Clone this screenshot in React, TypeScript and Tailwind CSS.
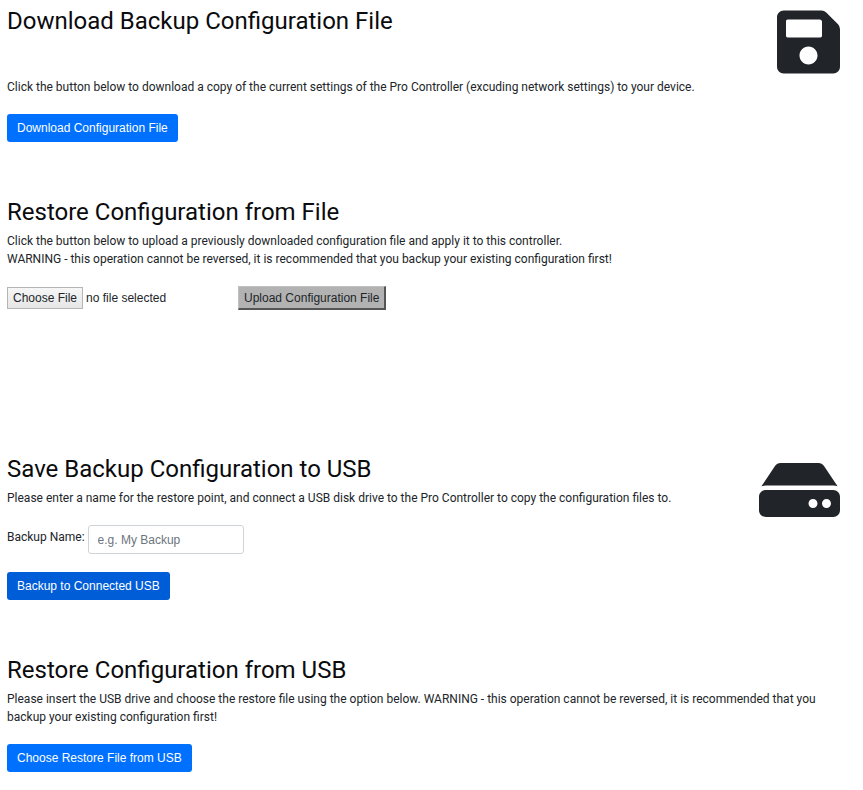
import { useState } from 'react'
import type { ReactNode } from 'react'
import { FaHdd, FaSave } from 'react-icons/fa'

interface SectionProps {
  title: string
  icon?: ReactNode
  children: ReactNode
}

function Section({ title, icon, children }: SectionProps) {
  return (
    <section className="flex items-start">
      <div className="min-w-0 flex-1">
        <h2 className="mb-[5px] text-[24px] leading-[30px] font-normal text-[#0a0b0d]">{title}</h2>
        {children}
      </div>
      {icon}
    </section>
  )
}

interface PrimaryButtonProps {
  active?: boolean
  children: ReactNode
}

function PrimaryButton({ active, children }: PrimaryButtonProps) {
  return (
    <button
      type="button"
      className={`block h-7 rounded-[3px] px-[10px] font-['Liberation_Sans',sans-serif] text-[12px] text-white ${
        active ? 'bg-[#005dd8]' : 'bg-[#0070ff] hover:bg-[#005dd8]'
      }`}
    >
      {children}
    </button>
  )
}

export default function App() {
  const [fileName, setFileName] = useState('')
  const [backupName, setBackupName] = useState('')

  return (
    <main className="bg-white px-[7px] pt-[6px] pb-[18px] font-['Roboto',sans-serif] text-[12px] leading-[18px] text-[#212529]">
      {/* Download */}
      <Section
        title="Download Backup Configuration File"
        icon={<FaSave className="mr-4 h-[72px] w-[63px] shrink-0" />}
      >
        <p className="mt-[42px] mb-[18px]">
          Click the button below to download a copy of the current settings of the Pro Controller (excuding network settings) to your device.
        </p>
        <PrimaryButton>Download Configuration File</PrimaryButton>
      </Section>

      {/* Restore from file */}
      <div className="mt-[55px]">
        <Section title="Restore Configuration from File">
          <p>
            Click the button below to upload a previously downloaded configuration file and apply it to this controller.
            <br />
            WARNING - this operation cannot be reversed, it is recommended that you backup your existing configuration first!
          </p>
          <form className="mt-[18px] flex items-center font-['Liberation_Sans',sans-serif]">
            <div className="flex w-[231px] items-center gap-[3px]">
              <label
                htmlFor="config-file"
                className="h-[22px] shrink-0 border border-[#b5b5b5] bg-linear-to-b from-[#f6f6f6] to-[#e6e6e6] px-[5px] leading-[20px] whitespace-nowrap"
              >
                Choose File
              </label>
              <input
                id="config-file"
                type="file"
                className="sr-only"
                onChange={(e) => setFileName(e.target.files?.[0]?.name ?? '')}
              />
              <span className="truncate">{fileName || 'no file selected'}</span>
            </div>
            <button
              type="button"
              className="h-6 border-t border-r-2 border-b-2 border-l border-t-[#c0c0c0] border-r-[#555555] border-b-[#555555] border-l-[#c0c0c0] bg-[#b2b2b2] px-[5px] leading-[20px]"
            >
              Upload Configuration File
            </button>
          </form>
        </Section>
      </div>

      {/* Save to USB */}
      <div className="mt-36">
        <Section
          title="Save Backup Configuration to USB"
          icon={<FaHdd className="mr-4 h-[72px] w-[81px] shrink-0" />}
        >
          <p>
            Please enter a name for the restore point, and connect a USB disk drive to the Pro Controller to copy the configuration files to.
          </p>
          <div className="my-[18px] flex items-start gap-[3px]">
            <label htmlFor="backup-name" className="pt-[3px]">
              Backup Name:
            </label>
            <input
              id="backup-name"
              type="text"
              value={backupName}
              onChange={(e) => setBackupName(e.target.value)}
              placeholder="e.g. My Backup"
              className="h-[29px] w-[156px] rounded-[3px] border border-[#ced4da] px-[9px] font-['Liberation_Sans',sans-serif] placeholder:text-[#6c757d]"
            />
          </div>
          <PrimaryButton active>Backup to Connected USB</PrimaryButton>
        </Section>
      </div>

      {/* Restore from USB */}
      <div className="mt-[55px]">
        <Section title="Restore Configuration from USB">
          <p className="mb-[18px]">
            Please insert the USB drive and choose the restore file using the option below. WARNING - this operation cannot be reversed, it is recommended that you backup your existing configuration first!
          </p>
          <PrimaryButton>Choose Restore File from USB</PrimaryButton>
        </Section>
      </div>
    </main>
  )
}
